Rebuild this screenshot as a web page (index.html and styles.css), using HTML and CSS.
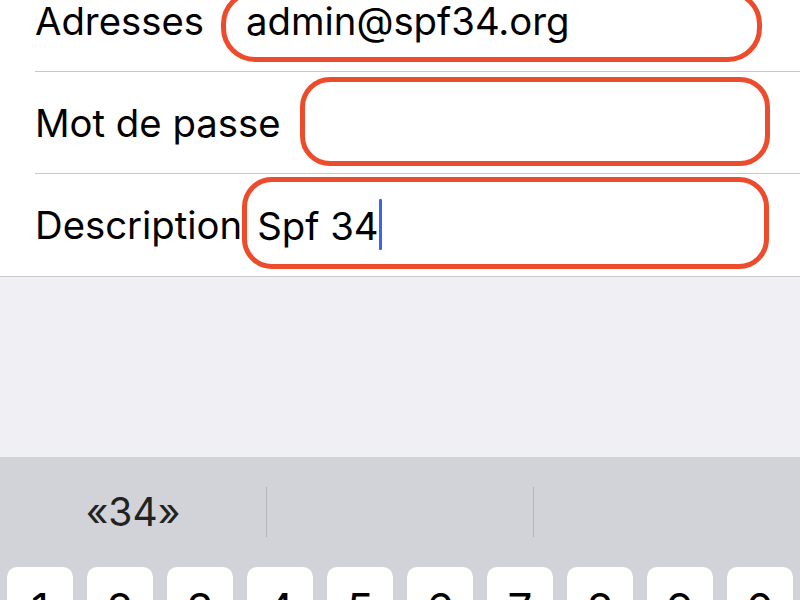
FILE: index.html
```html
<!DOCTYPE html>
<html lang="fr">
<head>
<meta charset="utf-8">
<link rel="stylesheet" href="styles.css">
</head>
<body>
<div class="screen">
  <div class="group">
    <div class="row row-1">
      <span class="label">Adresses</span>
      <div class="field field-1"><span class="value">admin@spf34.org</span></div>
    </div>
    <div class="row row-2">
      <span class="label">Mot de passe</span>
      <div class="field field-2"></div>
    </div>
    <div class="row row-3 last">
      <span class="label">Description</span>
      <div class="field field-3"><span class="value">Spf 34</span><span class="caret"></span></div>
    </div>
  </div>
  <div class="spacer"></div>
  <div class="keyboard">
    <div class="suggestions">
      <div class="sugg">«34»</div>
      <div class="sep"></div>
      <div class="sugg"></div>
      <div class="sep"></div>
      <div class="sugg"></div>
    </div>
    <div class="keys">
      <div class="key">1</div>
      <div class="key">2</div>
      <div class="key">3</div>
      <div class="key">4</div>
      <div class="key">5</div>
      <div class="key">6</div>
      <div class="key">7</div>
      <div class="key">8</div>
      <div class="key">9</div>
      <div class="key">0</div>
    </div>
  </div>
</div>
</body>
</html>
```
FILE: styles.css
```css
html, body {
  margin: 0;
  padding: 0;
  width: 800px;
  height: 600px;
  overflow: hidden;
  background: #efeff4;
  font-family: Inter, "Noto Sans", "Liberation Sans", sans-serif;
  color: #000;
}

.screen {
  display: flex;
  flex-direction: column;
  height: 600px;
}

.group {
  background: #fff;
  margin-top: -30px;
  border-bottom: 1px solid #c8c7cc;
}

.row {
  display: flex;
  align-items: center;
  height: 102px;
  margin-left: 35px;
  border-bottom: 1px solid #c8c7cc;
  box-sizing: border-box;
}

.row.last {
  border-bottom: none;
}

.label {
  font-size: 38.3px;
  white-space: nowrap;
}

.field {
  margin-left: auto;
  box-sizing: border-box;
  border: 5px solid #ec4b2c;
  display: flex;
  align-items: center;
}

.field-1 {
  width: 541px;
  height: 72px;
  margin-right: 38px;
  margin-top: 10px;
  border-radius: 34px;
  padding-left: 20px;
  padding-bottom: 9px;
}

.field-2 {
  width: 470px;
  height: 89px;
  margin-right: 30px;
  margin-bottom: 3px;
  border-radius: 30px;
}

.field-3 {
  width: 529px;
  height: 92px;
  margin-right: 31px;
  margin-bottom: 4px;
  border-radius: 30px;
  padding-left: 10px;
  padding-top: 6px;
}

.value {
  font-size: 38.3px;
  white-space: nowrap;
}

.caret {
  width: 3px;
  height: 51px;
  background: #3d63f2;
  border-radius: 1px;
  margin-top: -4px;
}

.spacer {
  flex: 0 0 180px;
}

.keyboard {
  flex: 1;
  background: #d1d3d9;
  display: flex;
  flex-direction: column;
}

.suggestions {
  display: flex;
  align-items: center;
  height: 110px;
}

.sugg {
  flex: 1;
  text-align: center;
  font-size: 39px;
  color: #222;
  padding-bottom: 2px;
}

.sep {
  width: 1px;
  height: 50px;
  background: #b4b6bb;
}

.keys {
  display: flex;
  gap: 14px;
  padding-left: 7px;
}

.key {
  flex: 0 0 66px;
  height: 84px;
  background: #fff;
  border-radius: 10px;
  font-size: 44px;
  text-align: center;
  padding-top: 20px;
  box-sizing: border-box;
  line-height: 1;
}
```
